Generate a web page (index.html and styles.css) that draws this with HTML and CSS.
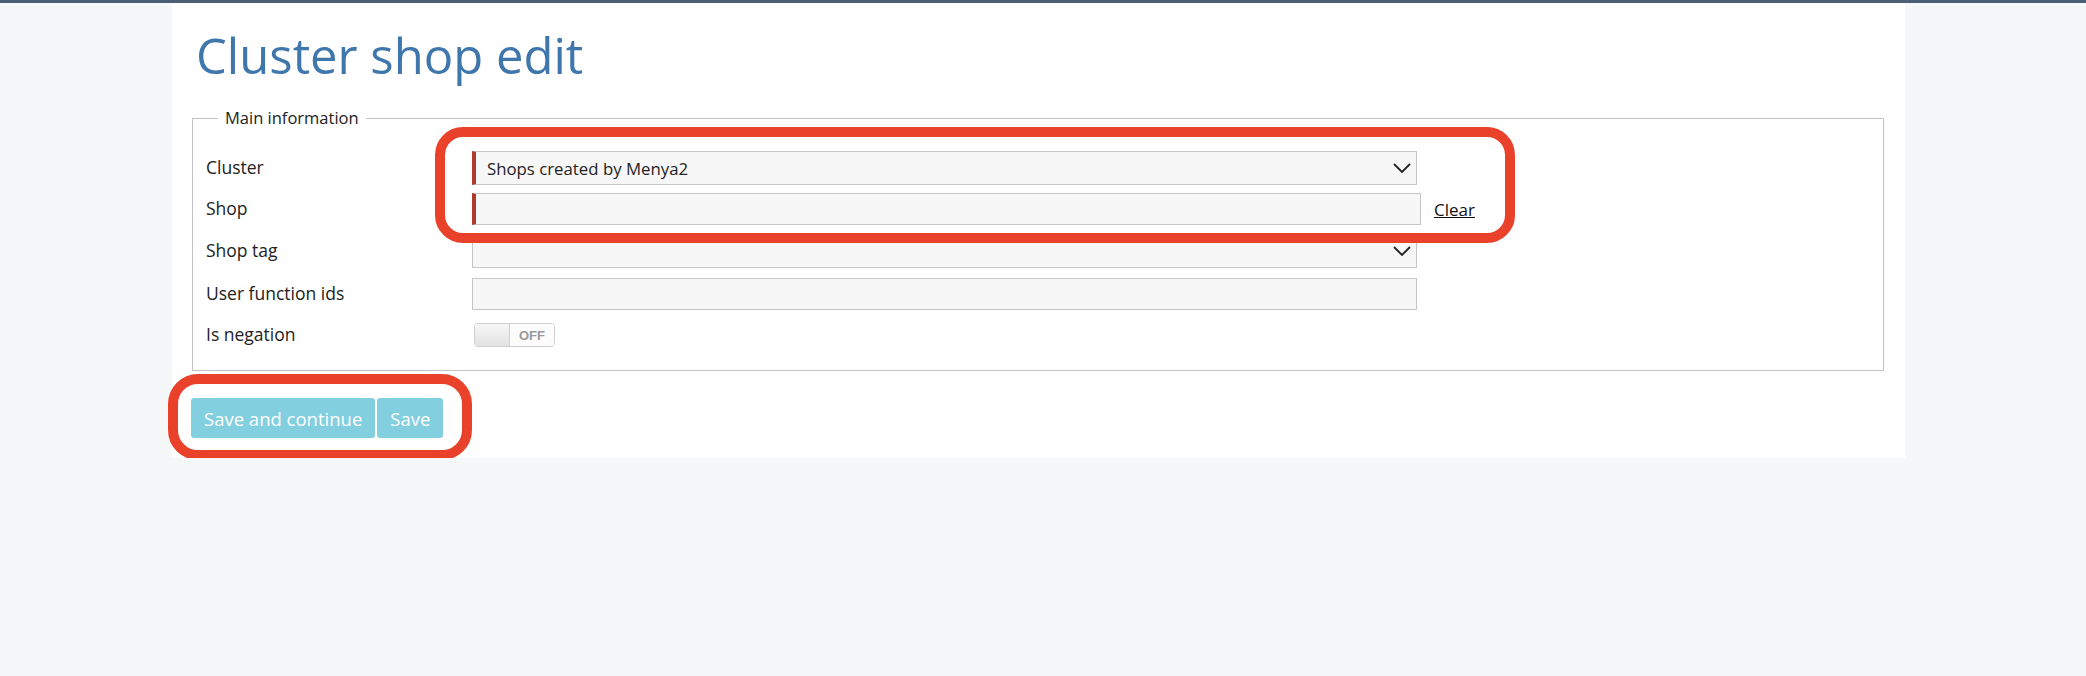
FILE: index.html
```html
<!DOCTYPE html>
<html lang="en">
<head>
    <meta charset="UTF-8">
    <title>Cluster shop edit</title>
    <link rel="stylesheet" href="styles.css">
</head>
<body>
    <div class="topbar"></div>
    <div class="panel">
        <h1>Cluster shop edit</h1>

        <fieldset class="main-info">
            <legend>Main information</legend>

            <div class="form-row row-cluster">
                <label>Cluster</label>
                <div class="select required">
                    <span>Shops created by Menya2</span>
                    <svg class="chevron" width="18" height="10" viewBox="0 0 18 10"><path d="M1 1 L9 9 L17 1" fill="none" stroke="#222" stroke-width="1.8"/></svg>
                </div>
            </div>

            <div class="form-row row-shop">
                <label>Shop</label>
                <input type="text" class="text-input required wide">
                <a href="#" class="clear-link">Clear</a>
            </div>

            <div class="form-row row-tag">
                <label>Shop tag</label>
                <div class="select">
                    <span></span>
                    <svg class="chevron" width="18" height="10" viewBox="0 0 18 10"><path d="M1 1 L9 9 L17 1" fill="none" stroke="#222" stroke-width="1.8"/></svg>
                </div>
            </div>

            <div class="form-row row-ids">
                <label>User function ids</label>
                <input type="text" class="text-input">
            </div>

            <div class="form-row row-negation">
                <label>Is negation</label>
                <div class="toggle">
                    <span class="knob"></span>
                    <span class="toggle-label">OFF</span>
                </div>
            </div>
        </fieldset>

        <div class="actions">
            <button class="btn">Save and continue</button>
            <button class="btn">Save</button>
        </div>

        <!-- highlight marks drawn over the form -->
        <div class="mark mark-fields"></div>
        <div class="mark mark-buttons"></div>
    </div>
</body>
</html>
```

FILE: styles.css
```css
body {
    margin: 0;
    background-color: #f6f7f9;
    font-family: "Open Sans", "Noto Sans", sans-serif;
    color: #222;
}
.topbar {
    height: 3px;
    background-color: #4a5e76;
}
.panel {
    position: relative;
    margin-left: 172px;
    width: 1733px;
    box-sizing: border-box;
    background-color: #fff;
    padding: 24px 21px 20px 20px;
}
h1 {
    margin: 0 0 24px 4px;
    font-size: 49px;
    font-weight: 400;
    line-height: 56px;
    color: #3f76ab;
}
.main-info {
    margin: 0;
    border: 1px solid #c3c3c3;
    padding: 22px 12px 23px 13px;
}
.main-info legend {
    margin-left: 12px;
    padding: 0 7px;
    font-size: 16.5px;
    line-height: 22px;
}
.form-row {
    display: flex;
    align-items: center;
}
.form-row label {
    width: 266px;
    flex-shrink: 0;
    font-size: 17.5px;
    margin-top: -3px;
}
.row-cluster { margin-bottom: 8px; }
.row-shop { margin-bottom: 9px; }
.row-tag { margin-bottom: 10px; }
.row-ids { margin-bottom: 13px; }
.select {
    width: 945px;
    height: 34px;
    box-sizing: border-box;
    display: flex;
    align-items: center;
    justify-content: space-between;
    background-color: #f7f7f7;
    border: 1px solid #c6c6c6;
    padding: 0 5px 0 11px;
    font-size: 16.8px;
}
.text-input {
    width: 945px;
    height: 32px;
    box-sizing: border-box;
    margin: 0;
    background-color: #f7f7f7;
    border: 1px solid #c6c6c6;
    border-radius: 0;
    font-family: inherit;
    font-size: 16px;
}
.text-input.wide {
    width: 949px;
}
.required {
    border-left: 4px solid #b03a2c;
}
.clear-link {
    margin-left: 13px;
    font-size: 17px;
    color: #111;
    text-decoration: underline;
}
.toggle {
    display: flex;
    width: 81px;
    height: 24px;
    box-sizing: border-box;
    border: 1px solid #cfcfcf;
    border-radius: 4px;
    overflow: hidden;
    margin-left: 2px;
}
.knob {
    width: 34px;
    background: linear-gradient(#f6f6f6, #e2e2e2);
    border-right: 1px solid #cfcfcf;
}
.toggle-label {
    flex: 1;
    display: flex;
    align-items: center;
    justify-content: center;
    font-family: "Liberation Sans", sans-serif;
    font-size: 13px;
    font-weight: bold;
    color: #9a9a9a;
    background-color: #fcfcfc;
}
.actions {
    display: flex;
    gap: 2px;
    margin-top: 27px;
    margin-left: -1px;
}
.btn {
    height: 40px;
    padding: 0 13px;
    border: none;
    border-radius: 3px;
    background-color: #82cfe0;
    color: #fff;
    font-family: inherit;
    font-size: 18.5px;
}
.mark {
    position: absolute;
    box-sizing: border-box;
    border: 10px solid #e9412a;
    border-radius: 28px;
}
.mark-fields {
    left: 263px;
    top: 124px;
    width: 1080px;
    height: 116px;
}
.mark-buttons {
    left: -4px;
    top: 371px;
    width: 304px;
    height: 86px;
    border-radius: 30px;
}
```
